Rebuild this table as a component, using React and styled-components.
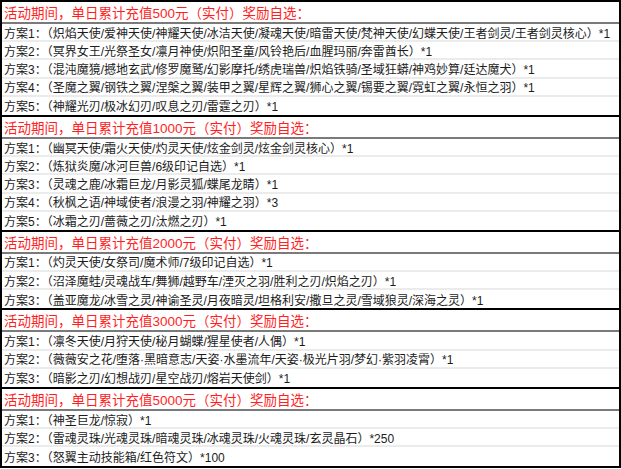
import React from 'react';
import styled, { createGlobalStyle } from 'styled-components';

const GlobalStyle = createGlobalStyle`
  html, body {
    margin: 0;
    padding: 0;
    background: #fff;
  }

  body {
    font-family: "Liberation Sans", "Noto Sans CJK SC", sans-serif;
  }
`;

const Table = styled.div`
  width: 621px;
  box-sizing: border-box;
  border: 2px solid #000;
  background: #fff;
`;

const Section = styled.section`
  & + & {
    border-top: 2px solid #000;
  }
`;

const Header = styled.div`
  height: 20px;
  display: flex;
  align-items: center;
  padding-left: 2px;
  border-bottom: 2px solid #7a7a7a;
  color: #ff1f1f;
  font-size: 13.5px;
  white-space: nowrap;
`;

const Row = styled.div`
  height: 18.2px;
  box-sizing: border-box;
  display: flex;
  align-items: center;
  padding-left: 2px;
  color: #1c1c1c;
  font-size: 12px;
  white-space: nowrap;
  overflow: hidden;

  &:not(:last-child) {
    border-bottom: 2px solid #ebebeb;
  }
`;

const sections = [
  {
    amount: 500,
    plans: [
      ['炽焰天使/爱神天使/神耀天使/冰洁天使/凝魂天使/暗雷天使/梵神天使/幻蝶天使/王者剑灵/王者剑灵核心', 1],
      ['冥界女王/光祭圣女/凛月神使/炽阳圣童/风铃艳后/血腥玛丽/奔雷酋长', 1],
      ['混沌魔獍/撼地玄武/修罗魔鹫/幻影摩托/绣虎瑞兽/炽焰铁骑/圣域狂蟒/神鸡妙算/廷达魔犬', 1],
      ['圣魔之翼/钢铁之翼/涅槃之翼/装甲之翼/星辉之翼/狮心之翼/锡要之翼/霓虹之翼/永恒之羽', 1],
      ['神耀光刃/极冰幻刃/叹息之刃/雷霆之刃', 1],
    ],
  },
  {
    amount: 1000,
    plans: [
      ['幽冥天使/霜火天使/灼灵天使/炫金剑灵/炫金剑灵核心', 1],
      ['炼狱炎魔/冰河巨兽/6级印记自选', 1],
      ['灵魂之鹿/冰霜巨龙/月影灵狐/蝶尾龙睛', 1],
      ['秋枫之语/神域使者/浪漫之羽/神耀之羽', 3],
      ['冰霜之刃/蔷薇之刃/汰燃之刃', 1],
    ],
  },
  {
    amount: 2000,
    plans: [
      ['灼灵天使/女祭司/魔术师/7级印记自选', 1],
      ['沼泽魔蛙/灵魂战车/舞狮/越野车/湮灭之羽/胜利之刃/炽焰之刃', 1],
      ['盖亚魔龙/冰雪之灵/神谕圣灵/月夜暗灵/坦格利安/撒旦之灵/雪域狼灵/深海之灵', 1],
    ],
  },
  {
    amount: 3000,
    plans: [
      ['凛冬天使/月狩天使/秘月蝴蝶/猩星使者/人偶', 1],
      ['薇薇安之花/堕落·黑暗意志/天姿·水墨流年/天姿·极光片羽/梦幻·紫羽凌霄', 1],
      ['暗影之刃/幻想战刃/星空战刃/熔岩天使剑', 1],
    ],
  },
  {
    amount: 5000,
    plans: [
      ['神圣巨龙/惊寂', 1],
      ['雷魂灵珠/光魂灵珠/暗魂灵珠/冰魂灵珠/火魂灵珠/玄灵晶石', 250],
      ['怒翼主动技能箱/红色符文', 100],
    ],
  },
];

const App = () => {
  return (
    <>
      <GlobalStyle />
      <Table>
        {sections.map((s) => (
          <Section key={s.amount}>
            <Header>活动期间，单日累计充值{s.amount}元（实付）奖励自选：</Header>
            {s.plans.map(([items, count], i) => (
              <Row key={i}>
                方案{i + 1}：（{items}）*{count}
              </Row>
            ))}
          </Section>
        ))}
      </Table>
    </>
  );
};

export default App;
